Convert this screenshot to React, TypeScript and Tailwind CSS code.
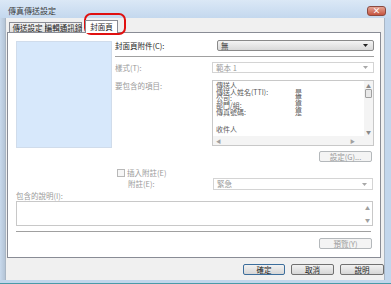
import React from 'react';

const font = { fontFamily: '"Noto Sans CJK TC", "Noto Sans", sans-serif' };

const Arrow = ({ dim }: { dim?: boolean }) => (
  <svg width="5" height="3" viewBox="0 0 5 3" className="shrink-0">
    <path d="M0 0H5L2.5 3Z" fill={dim ? '#a8a8a8' : '#222'} />
  </svg>
);

const Combo = ({ text, w, dim, h = 'h-[11px]' }: { text: string; w: string; dim?: boolean; h?: string }) =>
  dim ? (
    <div className={`${w} ${h} flex items-center justify-between border border-[#d4d4d4] bg-white pl-[3px] pr-[5px] text-[#9a9a9a]`}>
      <span>{text}</span>
      <Arrow dim />
    </div>
  ) : (
    <div className={`${w} ${h} flex items-center justify-between rounded-[2px] border border-[#8a8a8a] bg-linear-to-b from-[#f4f4f4] to-[#d9d9d9] pl-[3px] pr-[5px] text-[#1e1e1e]`}>
      <span>{text}</span>
      <Arrow />
    </div>
  );

const Btn = ({ text, w, dim, def }: { text: string; w: string; dim?: boolean; def?: boolean }) => (
  <div
    className={`${w} h-[11px] flex items-center justify-center whitespace-nowrap rounded-[2px] border ${
      dim
        ? 'border-[#b4b8bb] bg-[#f4f4f4] text-[#9a9a9a]'
        : def
        ? 'border-[#3c6e9c] bg-linear-to-b from-[#f2f2f2] to-[#d6d6d6] text-[#1e1e1e]'
        : 'border-[#707070] bg-linear-to-b from-[#f2f2f2] to-[#d6d6d6] text-[#1e1e1e]'
    }`}
  >
    {text}
  </div>
);

export default function App() {
  const items = ['傳送人姓名(TTI):', '公司:', '部門/組:', '傳真號碼:'];

  return (
    <div style={font} className="relative flex h-[284px] w-[391px] flex-col overflow-hidden whitespace-nowrap bg-[#c2d6ec] text-[7.5px] leading-[10px]">
      {/* Title bar */}
      <div className="flex h-[18px] shrink-0 items-center justify-between bg-linear-to-b from-[#dbe8f6] to-[#c4d8ee] pl-[8px] pr-[5px]">
        <span className="mt-[4px] text-[8px] text-[#3a3a3a]">傳真傳送設定</span>
        <div className="mb-[2px] mt-[5px] flex h-[10px] w-[19px] items-center justify-center rounded-[3px] border border-[#8a4a40] bg-linear-to-b from-[#e4a394] to-[#c5533f] text-[8px] font-bold leading-none text-white">
          ×
        </div>
      </div>

      <div className="flex flex-1">
        <div className="w-[6px] shrink-0 border-r border-[#a9b6c4] bg-linear-to-r from-[#c8d9ec] to-[#b4c4d6]" />
        {/* Body */}
        <div className="flex flex-1 flex-col bg-[#f0f0f0] pb-[5px]">
          {/* Tabs */}
          <div className="flex h-[14px] items-end pl-[3px]">
            <div className="flex h-[10px] w-[37px] items-center justify-center border border-b-0 border-[#898c95] bg-linear-to-b from-[#f2f2f2] to-[#dedede] text-[#1e1e1e]">
              傳送設定
            </div>
            <div className="flex h-[10px] w-[36px] items-center justify-center border border-b-0 border-l-0 border-[#898c95] bg-linear-to-b from-[#f2f2f2] to-[#dedede] text-[#1e1e1e]">
              編輯通訊錄
            </div>
            <div className="relative z-10 -mb-px ml-[3px] flex h-[13px] w-[33px] items-start justify-center border border-b-0 border-[#898c95] bg-white pt-[1px] text-[#1e1e1e]">
              封面頁
            </div>
          </div>

          {/* Panel */}
          <div className="ml-[1px] mr-[3px] flex h-[226px] flex-col border border-[#898c95] bg-white pl-[8px] pr-[6px] pt-[7px]">
            <div className="flex items-start">
              <div className="mt-[1px] h-[107px] w-[96px] shrink-0 border border-[#d0dceb] bg-[#d7e8fb]" />
              <div className="ml-[3px] flex flex-1 flex-col">
                <div className="flex h-[11px] items-center justify-between">
                  <span className="text-[#1e1e1e]">封面頁附件(C):</span>
                  <Combo text="無" w="w-[157px]" />
                </div>
                <div className="mt-[5px] h-[2px] border-t border-b border-t-[#a0a0a0] border-b-white" />
                <div className="mt-[4px] flex h-[11px] items-center justify-between">
                  <span className="text-[#9a9a9a]">樣式(T):</span>
                  <Combo text="範本 1" w="w-[162px]" dim />
                </div>
                <div className="mt-[7px] flex items-start justify-between">
                  <span className="mt-[1px] text-[#9a9a9a]">要包含的項目:</span>
                  {/* List box */}
                  <div className="flex h-[66px] w-[162px] flex-col border border-[#c8c8c8] bg-white">
                    <div className="flex flex-1">
                      <div className="flex flex-1 flex-col pl-[3px] pt-[1px] text-[7px] leading-[6.7px] text-[#5a5a5a]">
                        <span>傳送人</span>
                        {items.map((t) => (
                          <div key={t} className="flex">
                            <span className="w-[79px]">{t}</span>
                            <span>是</span>
                          </div>
                        ))}
                        <span className="mt-[10px]">收件人</span>
                      </div>
                      <div className="flex w-[9px] flex-col items-center bg-[#f4f4f4] py-[2px]">
                        <span className="text-[5px] leading-none text-[#8a8a8a]">▲</span>
                        <div className="mt-[1px] h-[9px] w-[7px] rounded-[1px] border border-[#a0a0a0] bg-[#e8e8e8]" />
                        <div className="flex-1" />
                        <span className="text-[5px] leading-none text-[#8a8a8a]">▼</span>
                      </div>
                    </div>
                    <div className="flex h-[9px] items-center justify-between bg-[#f4f4f4] pl-[3px] pr-[18px] text-[5px] leading-none text-[#a0a0a0]">
                      <span>◀</span>
                      <span>▶</span>
                    </div>
                  </div>
                </div>
                <div className="mr-[2px] mt-[5px] flex justify-end">
                  <Btn text="設定(G)..." w="w-[53px]" dim />
                </div>
                <div className="ml-[2px] mt-[6px] flex h-[9px] items-center">
                  <div className="h-[8px] w-[8px] border border-[#b8b8b8] bg-[#f6f6f6]" />
                  <span className="ml-[2px] text-[#9a9a9a]">插入附註(E)</span>
                </div>
                <div className="mr-[1px] mt-[1px] flex h-[12px] items-center justify-between">
                  <span className="ml-[13px] text-[#9a9a9a]">附註(E):</span>
                  <Combo text="緊急" w="w-[160px]" h="h-[12px]" dim />
                </div>
              </div>
            </div>

            <span className="mt-[1px] h-[10px] text-[#9a9a9a]">包含的說明(I):</span>
            <div className="mr-[1px] flex h-[25px] justify-end border border-[#c8c8c8] bg-white">
              <div className="flex w-[9px] flex-col items-center justify-between py-[3px] text-[5px] leading-none text-[#a0a0a0]">
                <span>▲</span>
                <span>▼</span>
              </div>
            </div>
            <div className="mr-[3px] mt-[5px] h-[2px] border-t border-b border-t-[#a0a0a0] border-b-white" />
            <div className="mr-[2px] mt-[5px] flex justify-end">
              <Btn text="預覽(Y)" w="w-[53px]" dim />
            </div>
          </div>

          {/* Dialog buttons */}
          <div className="mt-[6px] flex justify-end gap-[6px]">
            <Btn text="確定" w="w-[42px]" def />
            <Btn text="取消" w="w-[43px]" />
            <Btn text="說明" w="w-[44px]" />
          </div>
        </div>
        <div className="w-[7px] shrink-0 border-l border-[#a9b6c4] bg-[#c2d6ec]" />
      </div>
      <div className="h-[4px] shrink-0 border-b border-[#4a9aa8] bg-[#c2d6ec]" />

      {/* Red annotation around the selected tab */}
      <div className="absolute left-[84px] top-[13px] h-[22px] w-[42px] rounded-[7px] border-2 border-[#e01010]" />
    </div>
  );
}
